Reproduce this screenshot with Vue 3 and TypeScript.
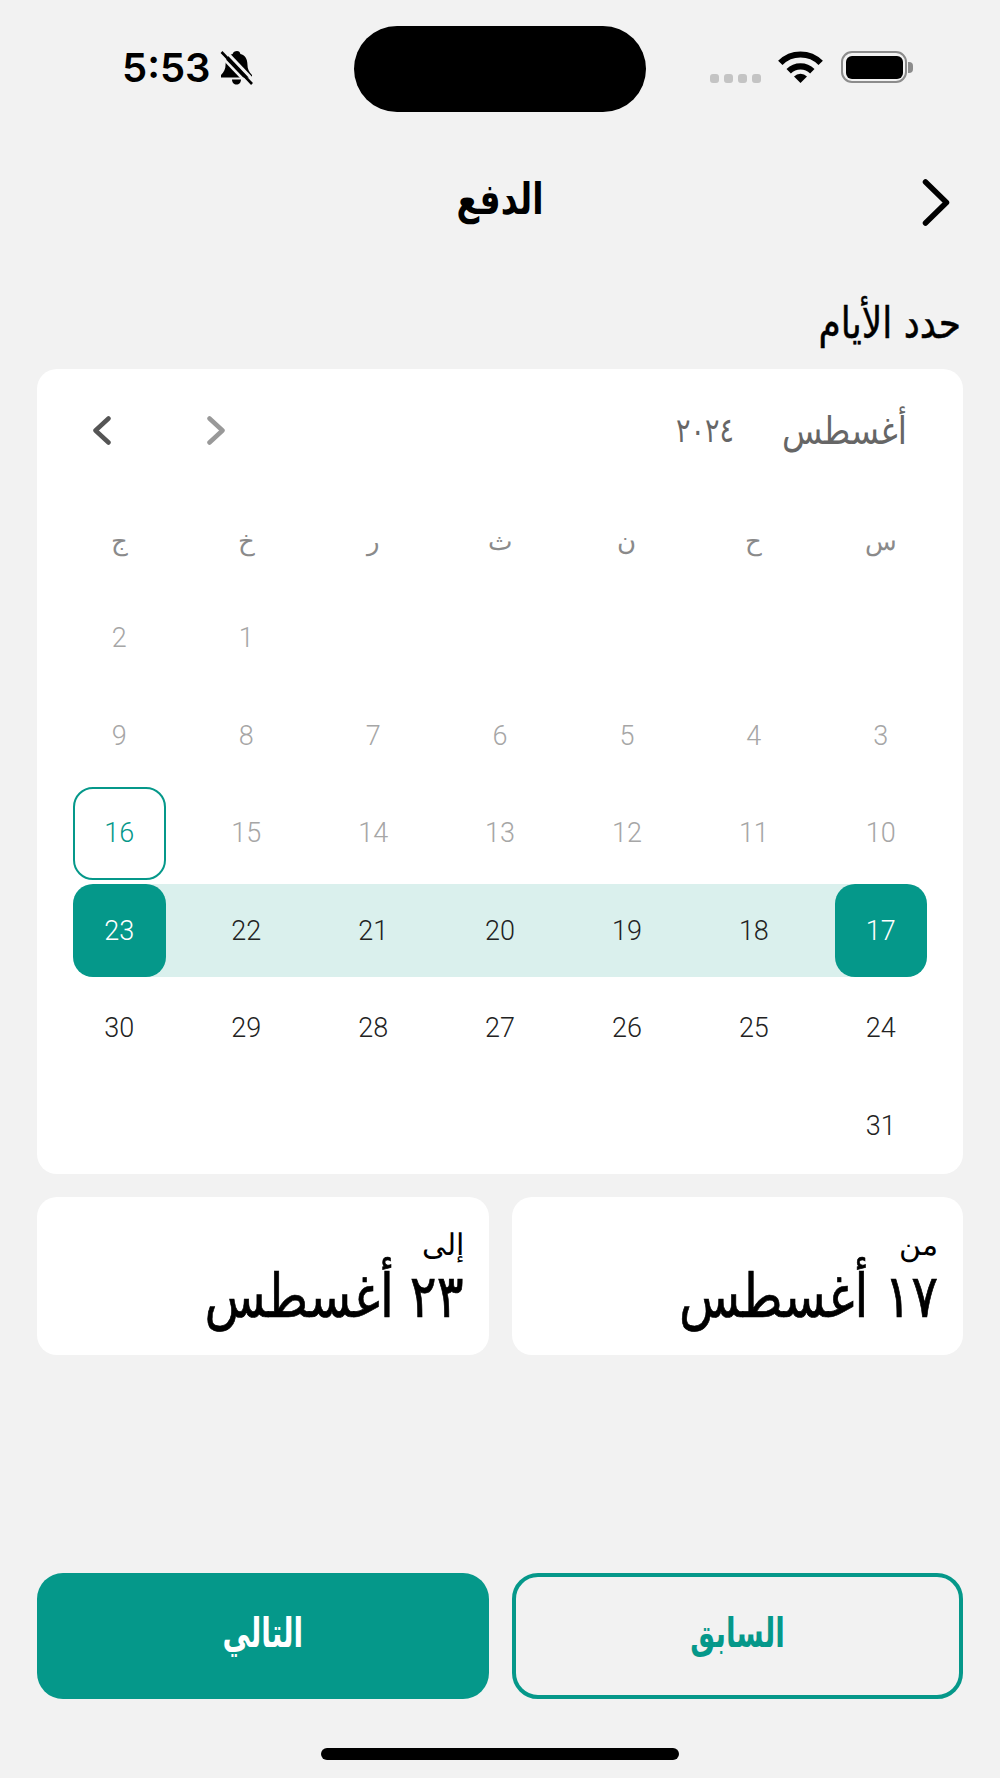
<script setup lang="ts">
// date-range step of the payment flow: August 2024, 17 to 23 selected
type DayKind = 'blank' | 'muted' | 'today' | 'start' | 'end' | 'between' | 'normal';

interface Day {
  label: string;
  kind: DayKind;
}

const weekdays = ['س', 'ح', 'ن', 'ث', 'ر', 'خ', 'ج'];

function kindOf(day: number): DayKind {
  if (day < 16) return 'muted';
  if (day === 16) return 'today';
  if (day === 17) return 'start';
  if (day === 23) return 'end';
  if (day < 23) return 'between';
  return 'normal';
}

const days: Day[] = [
  ...Array.from({ length: 5 }, (): Day => ({ label: '', kind: 'blank' })),
  ...Array.from({ length: 31 }, (_, i): Day => ({ label: String(i + 1), kind: kindOf(i + 1) })),
];
</script>

<template>
  <main class="page" dir="rtl">
    <div class="status" dir="ltr">
      <div class="status-left">
        <span class="time">5:53</span>
        <svg class="bell" viewBox="0 0 33 35" width="33" height="35">
          <path
            d="M17 1c2 0 3 1 3.400 3 4.600 1.200 7 5 7 10 0 5 1.600 8 4.600 11v2.500H1V25c3-3 4.600-6 4.600-11 0-5 2.400-8.800 7-10C13 2 15 1 17 1z"
            fill="#000"
          />
          <path d="M12 29.500h9c0 3-2 5-4.500 5S12 32.500 12 29.500z" fill="#000" />
          <path d="M5 0.500 L34 31" stroke="#f2f2f2" stroke-width="3" />
          <path d="M1.500 2 L32 34" stroke="#000" stroke-width="2.600" />
          <path d="M-1 4 L29 35.500" stroke="#f2f2f2" stroke-width="2.600" />
        </svg>
      </div>
      <div class="island"></div>
      <div class="status-right">
        <span class="dots"><i></i><i></i><i></i><i></i></span>
        <svg class="wifi" viewBox="0 0 45 32" width="45" height="32">
          <path d="M2.300 11.900a28.500 28.500 0 0 1 40.400 0" fill="none" stroke="#000" stroke-width="6.200" />
          <path d="M10.700 20.200a16.700 16.700 0 0 1 23.600 0" fill="none" stroke="#000" stroke-width="6.200" />
          <path d="M22.500 32 16 25.500a9.200 9.200 0 0 1 13 0z" fill="#000" />
        </svg>
        <span class="battery"><span class="battery-fill"></span></span>
        <span class="battery-nub"></span>
      </div>
    </div>

    <header class="topbar">
      <svg class="back" viewBox="0 0 28 47" width="28" height="47">
        <path d="M3.500 3l21 20.500L3.500 44" fill="none" stroke="#000" stroke-width="5.500" stroke-linecap="round" stroke-linejoin="round" />
      </svg>
      <h1>الدفع</h1>
    </header>

    <h2 class="section-title"><span>حدد الأيام</span></h2>

    <section class="calendar">
      <div class="month-row">
        <span class="month">أغسطس</span>
        <span class="year">٢٠٢٤</span>
        <span class="month-nav">
          <svg viewBox="0 0 18 29" width="18" height="29">
            <path d="M2.500 2.500L15.500 14.500L2.500 26.500" fill="none" stroke="#999" stroke-width="4.500" stroke-linecap="round" stroke-linejoin="round" />
          </svg>
          <svg viewBox="0 0 18 29" width="18" height="29">
            <path d="M15.500 2.500L2.500 14.500L15.500 26.500" fill="none" stroke="#555" stroke-width="4.500" stroke-linecap="round" stroke-linejoin="round" />
          </svg>
        </span>
      </div>
      <div class="grid">
        <div v-for="w in weekdays" :key="w" class="weekday">{{ w }}</div>
        <div v-for="(d, i) in days" :key="i" class="day" :class="d.kind">
          <span>{{ d.label }}</span>
        </div>
      </div>
    </section>

    <div class="range-cards">
      <div class="range-card">
        <span class="range-label">من</span>
        <strong class="range-value">١٧ أغسطس</strong>
      </div>
      <div class="range-card">
        <span class="range-label">إلى</span>
        <strong class="range-value">٢٣ أغسطس</strong>
      </div>
    </div>

    <footer class="actions">
      <button class="btn outline"><span>السابق</span></button>
      <button class="btn solid"><span>التالي</span></button>
    </footer>
    <div class="home-bar"></div>
  </main>
</template>

<style>
html,
body {
  background: #f2f2f2;
}
</style>

<style scoped>
.page {
  width: 1000px;
  height: 1778px;
  display: flex;
  flex-direction: column;
  background: #f2f2f2;
  font-family: 'DejaVu Sans', sans-serif;
  color: #000;
  box-sizing: border-box;
}
.status {
  display: grid;
  grid-template-columns: 1fr 292px 1fr;
  padding: 26px 0 0 0;
  height: 112px;
  box-sizing: content-box;
}
.status-left {
  display: flex;
  align-items: center;
  gap: 9px;
  padding-left: 122px;
  height: 84px;
}
.time {
  font-family: Inter, sans-serif;
  font-weight: 600;
  font-size: 40px;
  line-height: 1;
}
.bell {
  overflow: hidden;
  margin-top: -1px;
}
.island {
  height: 86px;
  background: #000;
  border-radius: 43px;
}
.status-right {
  display: flex;
  align-items: flex-start;
  padding: 25px 0 0 64px;
}
.dots {
  display: flex;
  gap: 5px;
  margin-top: 23px;
}
.dots i {
  width: 9px;
  height: 9px;
  border-radius: 3px;
  background: #c4c4c4;
}
.wifi {
  margin-left: 17px;
}
.battery {
  margin-left: 18px;
  width: 66px;
  height: 32px;
  box-sizing: border-box;
  border: 2.500px solid #8c8c8c;
  border-radius: 11px;
  padding: 2.500px;
}
.battery-fill {
  display: block;
  height: 100%;
  background: #000;
  border-radius: 6px;
}
.battery-nub {
  width: 5px;
  height: 11px;
  margin: 11px 0 0 1px;
  background: #8c8c8c;
  border-radius: 0 4px 4px 0;
}
.topbar {
  display: grid;
  grid-template-columns: 1fr auto 1fr;
  align-items: center;
  height: 47px;
  margin-top: 41px;
  padding: 0 50px;
}
.back {
  justify-self: start;
}
.topbar h1 {
  margin: 0;
  font-size: 33px;
  font-weight: 700;
  line-height: 47px;
  transform: translateY(-3px) scaleY(1.3);
}
.section-title {
  margin: 78px 0 0;
  padding: 0 39px 0 0;
  height: 40px;
  font-size: 36px;
  font-weight: 400;
  line-height: 40px;
}
.section-title span {
  display: inline-block;
  transform: scaleY(1.2);
  -webkit-text-stroke: 0.4px #000;
}
.calendar {
  margin: 25px 37px 0;
  height: 805px;
  box-sizing: border-box;
  padding: 35px 36px 0;
  background: #fff;
  border-radius: 20px;
}
.month-row {
  display: flex;
  align-items: center;
  height: 52px;
  margin-bottom: 38px;
  padding-right: 20px;
  color: #666;
}
.month {
  font-size: 33px;
  display: inline-block;
  transform: scaleY(1.15);
}
.year {
  margin-right: 48px;
  font-size: 27px;
  display: inline-block;
  transform: scaleY(1.25);
}
.month-nav {
  margin-right: auto;
  display: flex;
  gap: 96px;
  padding-left: 20px;
}
.grid {
  display: grid;
  grid-template-columns: repeat(7, 92.500px);
  grid-auto-rows: 93px;
  column-gap: 34.420px;
  row-gap: 4.600px;
}
.weekday {
  display: flex;
  align-items: center;
  justify-content: center;
  font-size: 26px;
  font-weight: 300;
  color: #8a8a8a;
}
.day {
  display: flex;
  font-family: Roboto, sans-serif;
  font-weight: 300;
  font-size: 27px;
  color: #222;
}
.day span {
  flex: 1;
  display: flex;
  align-items: center;
  justify-content: center;
  border-radius: 20px;
}
.day.muted {
  color: #a6a6a6;
}
.day.today span {
  border: 2px solid #05988a;
  color: #05988a;
}
.day.between {
  background: #daf0ed;
  box-shadow:
    35px 0 0 #daf0ed,
    -35px 0 0 #daf0ed;
}
/* raised so the neighbours' band shadow stays underneath the teal ends */
.day.start,
.day.end {
  position: relative;
  z-index: 1;
}
.day.start {
  background: linear-gradient(to left, transparent 50%, #daf0ed 50%);
}
.day.end {
  background: linear-gradient(to right, transparent 50%, #daf0ed 50%);
}
.day.start span,
.day.end span {
  background: #05988a;
  color: #fff;
}
.range-cards,
.actions {
  display: grid;
  grid-template-columns: 1fr 1fr;
  column-gap: 23px;
  margin: 0 37px;
}
.range-cards {
  margin-top: 23px;
}
.range-card {
  height: 158px;
  box-sizing: border-box;
  padding: 28px 25px 0;
  background: #fff;
  border-radius: 20px;
  display: flex;
  flex-direction: column;
  align-items: flex-start;
}
.range-label {
  font-size: 30px;
  line-height: 40px;
  font-weight: 300;
}
.range-value {
  font-size: 50px;
  line-height: 64px;
  font-weight: 400;
  transform: scale(1, 1.2);
  transform-origin: right center;
  -webkit-text-stroke: 0.6px #000;
}
.actions {
  margin-top: auto;
}
.btn {
  height: 126px;
  border-radius: 26px;
  font-family: inherit;
  font-size: 31px;
  font-weight: 700;
  box-sizing: border-box;
  padding: 0;
}
.btn span {
  display: inline-block;
  transform: translateY(-3px) scale(0.9, 1.3);
}
.btn.outline {
  background: transparent;
  border: 4.500px solid #05988a;
  color: #05988a;
}
.btn.solid {
  background: #05988a;
  border: 0;
  color: #fff;
}
.home-bar {
  width: 358px;
  height: 12px;
  margin: 49px auto 18px;
  background: #000;
  border-radius: 6px;
}
</style>
